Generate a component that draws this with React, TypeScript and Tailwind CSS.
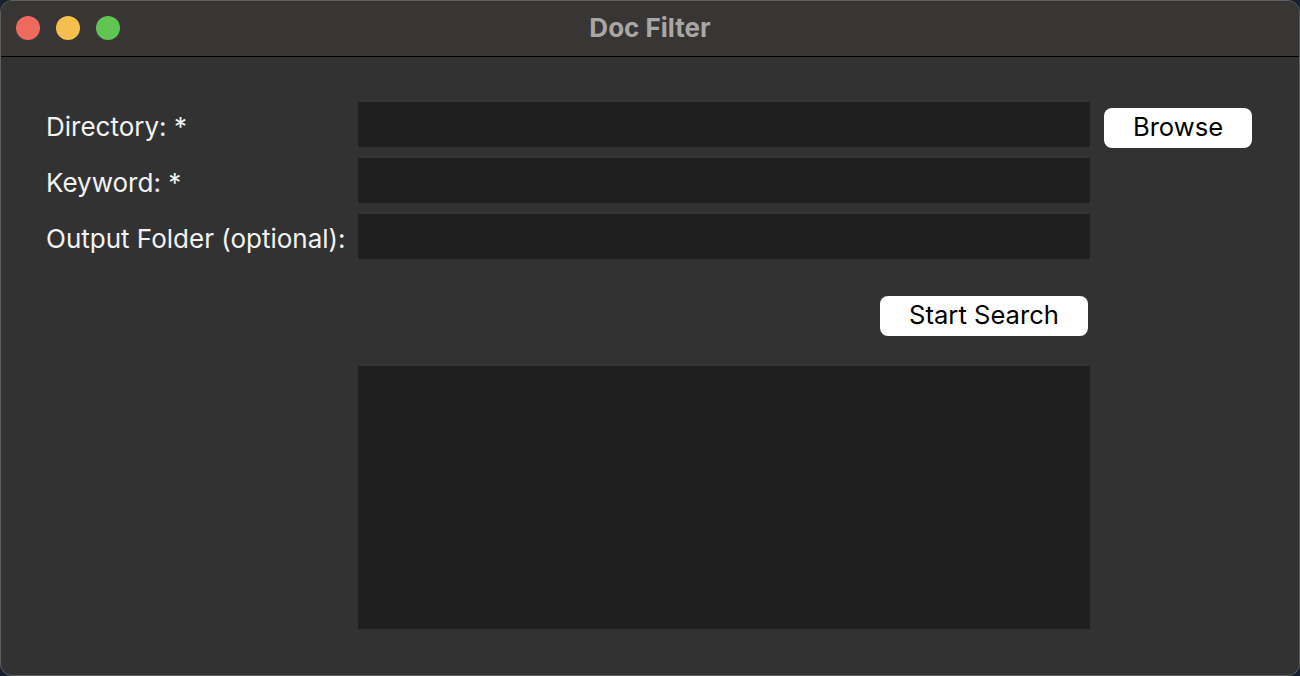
import React from "react";

export default function App() {
  const font = { fontFamily: "Inter, 'Noto Sans', sans-serif" };
  return (
    <div className="w-[1300px] h-[676px] bg-[#16202e] overflow-hidden" style={font}>
      <div className="w-[1300px] h-[676px] rounded-[12px] border border-[#5e5e5e] bg-[#323232] overflow-hidden flex flex-col">
        <div className="h-[56px] shrink-0 bg-[#383634] border-b border-black relative flex items-center justify-center">
          <div className="absolute left-[15px] top-[15px] flex gap-[16px]">
            <span className="w-[24px] h-[24px] rounded-full bg-[#ee6a5f]" />
            <span className="w-[24px] h-[24px] rounded-full bg-[#f5bf4f]" />
            <span className="w-[24px] h-[24px] rounded-full bg-[#61c554]" />
          </div>
          <span className="text-[26px] font-bold text-[#a8a7a6] pb-[2px]">Doc Filter</span>
        </div>
        <div className="flex-1 pt-[45px] pl-[45px] flex">
          <div className="flex flex-col gap-[11px] w-[312px] text-[26px] text-[#f2f2f2]">
            <div className="h-[45px] flex items-center pt-[3px]">Directory: *</div>
            <div className="h-[45px] flex items-center pt-[3px]">Keyword: *</div>
            <div className="h-[45px] flex items-center pt-[3px] whitespace-nowrap">Output Folder (optional):</div>
          </div>
          <div className="flex flex-col w-[732px]">
            <div className="flex flex-col gap-[11px]">
              <div className="h-[45px] bg-[#1f1f1f]" />
              <div className="h-[45px] bg-[#1f1f1f]" />
              <div className="h-[45px] bg-[#1f1f1f]" />
            </div>
            <div className="flex justify-end pr-[2px] mt-[37px]">
              <button className="w-[208px] h-[40px] bg-white rounded-[8px] text-[25.6px] text-black flex items-center justify-center pb-[2px]">
                Start Search
              </button>
            </div>
            <div className="mt-[30px] h-[263px] bg-[#1f1f1f]" />
          </div>
          <div className="pl-[14px] pt-[6px]">
            <button className="w-[148px] h-[40px] bg-white rounded-[8px] text-[25.6px] text-black flex items-center justify-center pb-[2px]">
              Browse
            </button>
          </div>
        </div>
      </div>
    </div>
  );
}
